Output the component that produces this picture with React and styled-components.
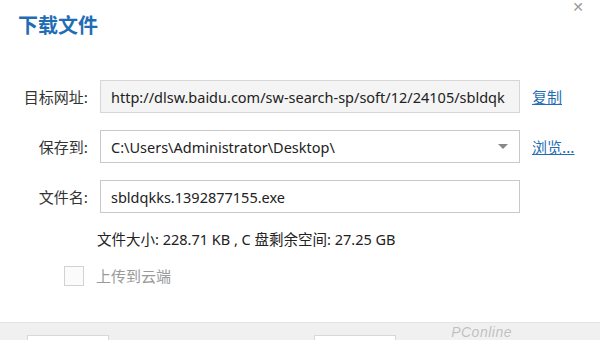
import React from 'react';
import styled, { createGlobalStyle } from 'styled-components';

const Global = createGlobalStyle`
  html, body {
    margin: 0;
    background: #ffffff;
  }
  body {
    font-family: "Noto Sans", "Noto Sans CJK SC", sans-serif;
  }
`;

const Dialog = styled.div`
  width: 600px;
  height: 340px;
  position: relative;
  display: flex;
  flex-direction: column;
  background: #fff;
  overflow: hidden;
`;

const Header = styled.div`
  height: 52px;
  padding: 12px 0 0 18px;
  box-sizing: border-box;
`;

const Title = styled.div`
  font-family: "Noto Sans CJK SC", sans-serif;
  font-size: 20px;
  font-weight: 700;
  color: #1f6db4;
  line-height: 26px;
`;

const Close = styled.div`
  position: absolute;
  top: 0;
  right: 16px;
  color: #9a9a9a;
  font-family: "DejaVu Sans", sans-serif;
  font-size: 14px;
  line-height: 15px;
`;

const Form = styled.div`
  display: flex;
  flex-direction: column;
  gap: 17px;
  padding-top: 28px;
`;

const Row = styled.div`
  display: grid;
  grid-template-columns: 88px 420px auto;
  column-gap: 12px;
  align-items: center;
`;

const Label = styled.div`
  text-align: right;
  font-family: "Noto Sans CJK SC", sans-serif;
  font-size: 15px;
  color: #333;
`;

const Field = styled.div`
  height: 33px;
  box-sizing: border-box;
  border: 1px solid ${p => (p.$readonly ? '#d6d6d6' : '#c9c9c9')};
  background: ${p => (p.$readonly ? '#f4f4f4' : '#ffffff')};
  display: flex;
  align-items: center;
  padding: 0 10px;
  font-size: 14.5px;
  color: #222;
  white-space: nowrap;
`;

const FieldText = styled.span`
  flex: 1;
`;

const Arrow = styled.span`
  width: 0;
  height: 0;
  border-left: 5px solid transparent;
  border-right: 5px solid transparent;
  border-top: 5px solid #888;
  margin-right: 1px;
`;

const Link = styled.a`
  font-family: "Noto Sans CJK SC", sans-serif;
  font-size: 15px;
  color: #1f6db4;
  text-decoration: underline;
  cursor: pointer;
`;

const Info = styled.div`
  padding: 15px 0 0 97px;
  font-size: 14.5px;
  color: #222;
  font-family: "Noto Sans", "Noto Sans CJK SC", sans-serif;
`;

const CheckRow = styled.label`
  display: flex;
  align-items: center;
  gap: 12px;
  padding: 16px 0 0 64px;
  font-family: "Noto Sans CJK SC", sans-serif;
  font-size: 15px;
  color: #9a9a9a;
`;

const Box = styled.span`
  width: 20px;
  height: 20px;
  box-sizing: border-box;
  border: 1px solid #d2d2d2;
  background: #fbfbfb;
`;

const Footer = styled.div`
  margin-top: auto;
  height: 17px;
  background: #f0f0f0;
  border-top: 1px solid #e4e4e4;
  display: flex;
  align-items: flex-end;
  padding-left: 27px;
  gap: 205px;
  position: relative;
`;

const FooterButton = styled.div`
  width: 80px;
  height: 4px;
  background: #fff;
  border: 1px solid #d8d8d8;
  border-bottom: none;
`;

const Watermark = styled.div`
  position: absolute;
  right: 88px;
  bottom: 0;
  font-family: "Liberation Sans", sans-serif;
  font-size: 14px;
  line-height: 16px;
  font-style: italic;
  color: rgba(150, 150, 150, 0.55);
  letter-spacing: 0.5px;
`;

export default function App() {
  return (
    <Dialog>
      <Global />
      <Header>
        <Title>下载文件</Title>
      </Header>
      <Close>✕</Close>
      <Form>
        <Row>
          <Label>目标网址:</Label>
          <Field $readonly>
            <FieldText>http://dlsw.baidu.com/sw-search-sp/soft/12/24105/sbldqk</FieldText>
          </Field>
          <Link>复制</Link>
        </Row>
        <Row>
          <Label>保存到:</Label>
          <Field>
            <FieldText>C:\Users\Administrator\Desktop\</FieldText>
            <Arrow />
          </Field>
          <Link>浏览...</Link>
        </Row>
        <Row>
          <Label>文件名:</Label>
          <Field>
            <FieldText>sbldqkks.1392877155.exe</FieldText>
          </Field>
        </Row>
      </Form>
      <Info>文件大小: 228.71 KB , C 盘剩余空间: 27.25 GB</Info>
      <CheckRow>
        <Box />
        上传到云端
      </CheckRow>
      <Footer>
        <FooterButton />
        <FooterButton />
        <Watermark>PConline</Watermark>
      </Footer>
    </Dialog>
  );
}
